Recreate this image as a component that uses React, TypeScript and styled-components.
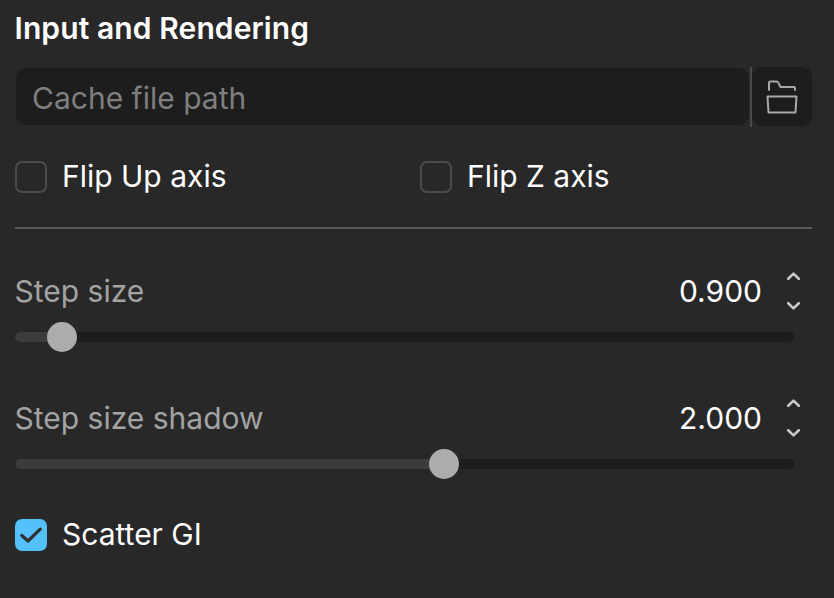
import React from "react";
import styled, { createGlobalStyle } from "styled-components";

const Global = createGlobalStyle`
  html, body { margin: 0; padding: 0; background: #282828; }
  body { font-family: Inter, "Liberation Sans", sans-serif; color: #fff; }
`;

const Panel = styled.div`
  width: 834px;
  height: 598px;
  box-sizing: border-box;
  padding: 11px 22px 0 15px;
  background: #282828;
  display: flex;
  flex-direction: column;
  overflow: hidden;
`;

const Title = styled.h2`
  margin: 0 0 0 -0.5px;
  font-size: 30px;
  line-height: 34px;
  font-weight: 600;
  letter-spacing: 0.1px;
  color: #fff;
`;

const PathRow = styled.div`
  display: flex;
  align-items: stretch;
  height: 60px;
  margin-top: 22px;
`;

const PathInput = styled.div`
  flex: 1;
  margin: 1px 0 2px 1px;
  padding: 2px 0 0 16px;
  display: flex;
  align-items: center;
  background: #1d1d1d;
  border-radius: 10px;
  font-size: 30px;
  color: #7f7f7f;
`;

const VDivider = styled.div`
  width: 2px;
  margin-left: 1px;
  background: #4a4a4a;
`;

const FolderButton = styled.div`
  width: 60px;
  margin-bottom: 1px;
  background: #1d1d1d;
  border-radius: 10px;
  display: flex;
  align-items: center;
  justify-content: center;
`;

const CheckRow = styled.div`
  display: flex;
  margin-top: 34px;
`;

const CheckItem = styled.label<{ $width?: number }>`
  display: flex;
  align-items: center;
  gap: 15px;
  height: 32px;
  width: ${(p) => (p.$width ? `${p.$width}px` : "auto")};
  font-size: 30px;
  color: #fff;
`;

const CheckText = styled.span`
  margin-top: -2px;
`;

const Box = styled.span<{ $checked?: boolean }>`
  width: 32px;
  height: 32px;
  box-sizing: border-box;
  border-radius: 7px;
  border: ${(p) => (p.$checked ? "none" : "2px solid #4b4b4b")};
  background: ${(p) => (p.$checked ? "#55c1fb" : "transparent")};
  display: flex;
  align-items: center;
  justify-content: center;
`;

const Rule = styled.hr`
  width: 100%;
  height: 2px;
  margin: 34px 0 0;
  border: none;
  background: #5a5a5a;
`;

const Field = styled.div<{ $top: number }>`
  margin-top: ${(p) => p.$top}px;
`;

const FieldHead = styled.div`
  display: flex;
  align-items: center;
  height: 60px;
`;

const FieldLabel = styled.span`
  flex: 1;
  margin-left: -0.5px;
  font-size: 30px;
  color: #a3a3a3;
`;

const FieldValue = styled.span`
  font-size: 30px;
  color: #fff;
`;

const Spinner = styled.div`
  width: 13px;
  margin-left: 25px;
  margin-right: 12px;
  height: 58px;
  display: flex;
  flex-direction: column;
  justify-content: space-between;
  padding: 10px 0;
  box-sizing: border-box;
`;

const Track = styled.div`
  position: relative;
  width: 779px;
  height: 10px;
  margin-top: 11px;
  border-radius: 5px;
  background: #1d1d1d;
`;

const TrackFill = styled.div`
  height: 100%;
  border-radius: 5px;
  background: #3c3c3c;
`;

const Thumb = styled.div`
  position: absolute;
  top: 50%;
  width: 30px;
  height: 30px;
  margin: -15px 0 0 -15px;
  border-radius: 50%;
  background: #acacac;
`;

const ScatterRow = styled.div`
  margin-top: 50px;
`;

const Folder = () => (
  <svg width="32" height="34" viewBox="0 0 32 34" fill="none" stroke="#a8a8a8" strokeWidth="2" strokeLinejoin="round" strokeLinecap="round">
    <path d="M3 10V3Q3 1.5 4.5 1.5H10.5Q11.8 1.5 12.3 2.6L14.5 7H28Q29 7 29 8V10" />
    <path d="M1.5 16.5H30.5L29.5 32.5H2.5Z" />
  </svg>
);

const Chevron = ({ up }: { up?: boolean }) => (
  <svg width="13" height="8" viewBox="0 0 13 8" fill="none" stroke="#c8c8c8" strokeWidth="2.6" strokeLinecap="round" strokeLinejoin="round">
    <path d={up ? "M1.2 6.8L6.5 1.6L11.8 6.8" : "M1.2 1.2L6.5 6.4L11.8 1.2"} />
  </svg>
);

const Check = () => (
  <svg width="22" height="18" viewBox="0 0 22 18" fill="none" stroke="#303030" strokeWidth="3.2" strokeLinecap="round" strokeLinejoin="round">
    <path d="M1.8 9.5L8 15L20.2 3.2" />
  </svg>
);

const Slider = ({ label, value, pct, top }: { label: string; value: string; pct: number; top: number }) => (
  <Field $top={top}>
    <FieldHead>
      <FieldLabel>{label}</FieldLabel>
      <FieldValue>{value}</FieldValue>
      <Spinner>
        <Chevron up />
        <Chevron />
      </Spinner>
    </FieldHead>
    <Track>
      <TrackFill style={{ width: `${pct}%` }} />
      <Thumb style={{ left: `${pct}%` }} />
    </Track>
  </Field>
);

export default function App() {
  return (
    <>
      <Global />
      <Panel>
        <Title>Input and Rendering</Title>
        <PathRow>
          <PathInput>Cache file path</PathInput>
          <VDivider />
          <FolderButton>
            <Folder />
          </FolderButton>
        </PathRow>
        <CheckRow>
          <CheckItem $width={405}>
            <Box />
            <CheckText>Flip Up axis</CheckText>
          </CheckItem>
          <CheckItem>
            <Box />
            <CheckText>Flip Z axis</CheckText>
          </CheckItem>
        </CheckRow>
        <Rule />
        <Slider label="Step size" value="0.900" pct={6} top={32} />
        <Slider label="Step size shadow" value="2.000" pct={55.1} top={46} />
        <ScatterRow>
          <CheckItem>
            <Box $checked>
              <Check />
            </Box>
            <CheckText>Scatter GI</CheckText>
          </CheckItem>
        </ScatterRow>
      </Panel>
    </>
  );
}
